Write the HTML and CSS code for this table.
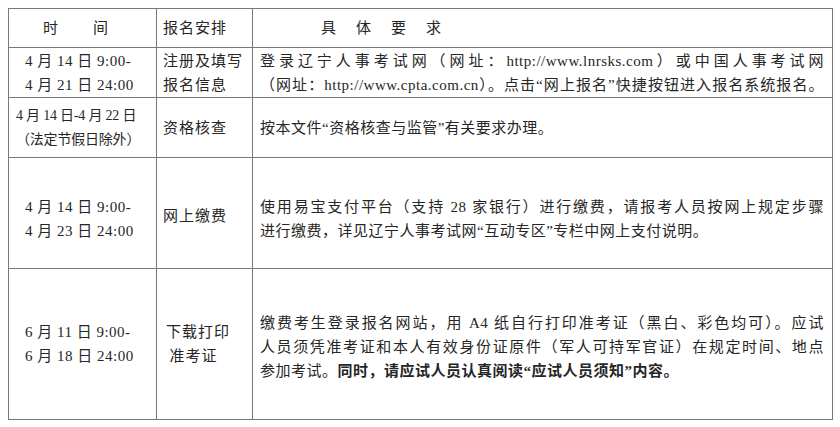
FILE: index.html
```html
<!DOCTYPE html>
<html lang="zh-CN">
<head>
<meta charset="utf-8">
<link rel="stylesheet" href="styles.css">
</head>
<body>
<table class="schedule">
  <colgroup>
    <col class="c-time">
    <col class="c-step">
    <col class="c-req">
  </colgroup>
  <tr class="row-head">
    <td class="time head-time">时间</td>
    <td class="step">报名安排</td>
    <td class="req head-req">具体要求</td>
  </tr>
  <tr class="row-1">
    <td class="time"><span class="ln">4 月 14 日 9:00-</span><span class="ln">4 月 21 日 24:00</span></td>
    <td class="step"><span class="ln">注册及填写</span><span class="ln">报名信息</span></td>
    <td class="req"><span class="ln j">登录辽宁人事考试网（网址：http://www.lnrsks.com）或中国人事考试网</span><span class="ln j">（网址：http://www.cpta.com.cn）。点击“网上报名”快捷按钮进入报名系统报名。</span></td>
  </tr>
  <tr class="row-2">
    <td class="time narrow"><span class="ln">4 月 14 日-4 月 22 日</span><span class="ln">（法定节假日除外）</span></td>
    <td class="step">资格核查</td>
    <td class="req">按本文件“资格核查与监管”有关要求办理。</td>
  </tr>
  <tr class="row-3">
    <td class="time"><div class="low"><span class="ln">4 月 14 日 9:00-</span><span class="ln">4 月 23 日 24:00</span></div></td>
    <td class="step"><div class="low-s">网上缴费</div></td>
    <td class="req"><div class="low"><span class="ln j">使用易宝支付平台（支持 28 家银行）进行缴费，请报考人员按网上规定步骤</span><span class="ln">进行缴费，详见辽宁人事考试网“互动专区”专栏中网上支付说明。</span></div></td>
  </tr>
  <tr class="row-4">
    <td class="time"><span class="ln">6 月 11 日 9:00-</span><span class="ln">6 月 18 日 24:00</span></td>
    <td class="step centered"><span class="ln">下载打印</span><span class="ln">准考证</span></td>
    <td class="req"><div class="low-s"><span class="ln j">缴费考生登录报名网站，用 A4 纸自行打印准考证（黑白、彩色均可）。应试</span><span class="ln j">人员须凭准考证和本人有效身份证原件（军人可持军官证）在规定时间、地点</span><span class="ln">参加考试。<b class="strong">同时，请应试人员认真阅读“应试人员须知”内容。</b></span></div></td>
  </tr>
</table>
</body>
</html>
```

FILE: styles.css
```css
html, body {
  margin: 0;
  padding: 0;
  background: #ffffff;
}
body {
  padding: 8px;
  font-family: "Liberation Serif", "Noto Sans CJK SC", serif;
  font-size: 15px;
  letter-spacing: 0.5px;
  color: #262626;
}
.schedule {
  border-collapse: collapse;
  table-layout: fixed;
  width: 824px;
}
.c-time { width: 148px; }
.c-step { width: 96px; }
.c-req { width: 580px; }
.schedule td {
  border: 1px solid #787878;
  padding: 0;
  vertical-align: middle;
  line-height: 24px;
  text-align: left;
  white-space: nowrap;
}
.schedule td.req {
  white-space: normal;
}
.ln {
  display: block;
}
.j {
  text-align: justify;
  text-align-last: justify;
}
.row-head td { height: 38px; }
.row-1 td { height: 49px; }
.row-2 td { height: 59px; }
.row-3 td { height: 110px; }
.row-4 td { height: 150px; }

.low { margin-top: 12px; }
.low-s { margin-top: 5px; }

.time { padding-left: 16px !important; }
.time.narrow {
  padding-left: 7px !important;
  font-size: 14px;
  letter-spacing: -0.2px;
}
.head-time {
  padding-left: 34px !important;
  letter-spacing: 35px;
}
.step {
  padding-left: 6px !important;
  letter-spacing: 1px;
}
.step.centered {
  padding-left: 9px !important;
  padding-right: 31px !important;
  text-align: center !important;
  letter-spacing: 1px;
}
.req {
  padding-left: 7px !important;
  padding-right: 8px !important;
}
.head-req {
  padding-left: 68px !important;
  letter-spacing: 20px;
}
.strong {
  font-weight: bold;
}
```
